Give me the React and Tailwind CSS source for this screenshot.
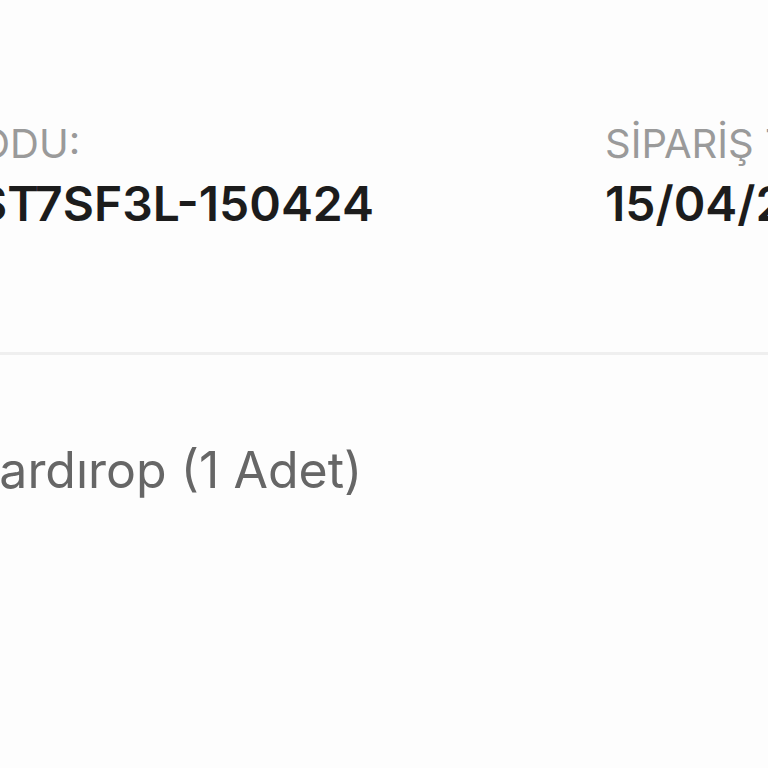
export default function App() {
  return (
    <div className="h-[768px] w-[768px] overflow-hidden bg-[#fdfdfd]" style={{ fontFamily: 'Inter, "Noto Sans", sans-serif' }}>
      {/* Order meta */}
      <div className="flex pt-[120px] h-[352px]">
        <div className="w-[605px] shrink-0 flex flex-col">
          <div className="-ml-[46px] text-[40px] leading-[48px] text-[#9a9a9a] whitespace-nowrap">KODU:</div>
          <div className="-ml-[24px] mt-[8px] text-[48px] leading-[56px] font-semibold text-[#1c1c1c] whitespace-nowrap">ST7SF3L-150424</div>
        </div>
        <div className="flex flex-col">
          <div className="text-[40px] leading-[48px] text-[#9a9a9a] whitespace-nowrap">SİPARİŞ TARİHİ:</div>
          <div className="mt-[8px] text-[48px] leading-[56px] font-semibold text-[#1c1c1c] whitespace-nowrap">15/04/2024</div>
        </div>
      </div>

      <div className="h-[3px] bg-[#efefef]" />

      {/* Product line */}
      <div className="pt-[86px]">
        <div className="-ml-[38px] text-[50px] leading-[58px] text-[#666666] whitespace-nowrap">Gardırop (1 Adet)</div>
      </div>
    </div>
  );
}
